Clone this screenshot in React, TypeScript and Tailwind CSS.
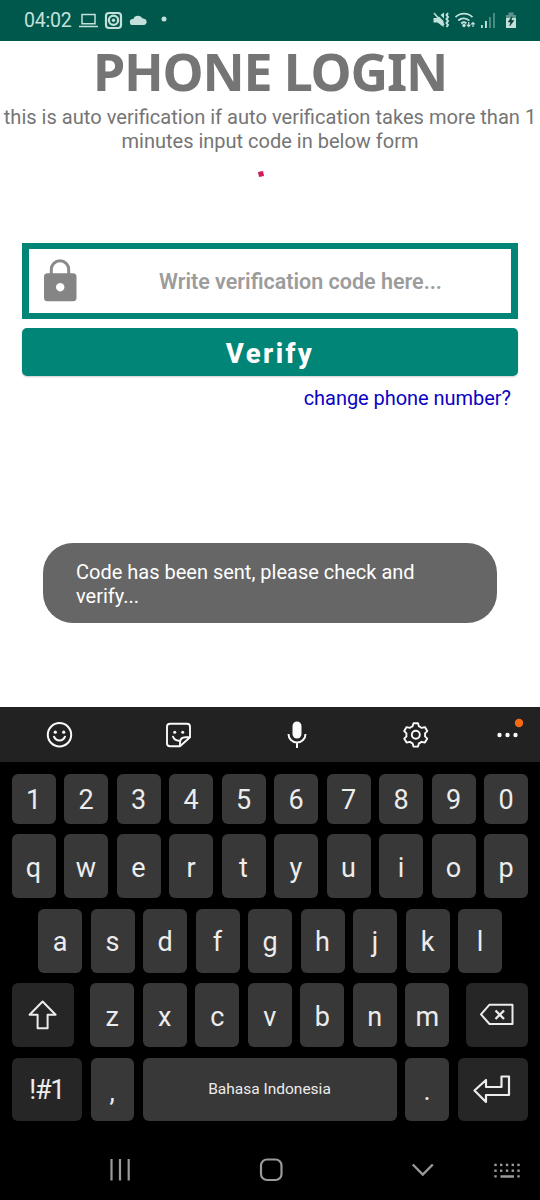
import type { ReactNode } from "react";

type KeyProps = { children: ReactNode; className?: string };

function Key({ children, className = "w-11 bg-[#383838] text-[27px]" }: KeyProps) {
  return (
    <div className={`flex h-full shrink-0 items-center justify-center rounded-[6px] text-[#ececec] ${className}`}>
      {children}
    </div>
  );
}

function LetterKeys({ letters }: { letters: string }) {
  return (
    <>
      {letters.split("").map((c) => (
        <Key key={c}>
          <span className="pt-[4px]">{c}</span>
        </Key>
      ))}
    </>
  );
}

function StatusBar() {
  return (
    <header className="flex h-[41px] items-center bg-[#00574b] text-[#c3e0db]">
      <span className="ml-6 w-[49px] text-[19.500px] leading-none tracking-[-0.200px] whitespace-nowrap">04:02</span>
      <svg className="ml-[5px]" width="21" height="18" viewBox="78 11 21 18" fill="none" stroke="currentColor" strokeWidth="1.5">
        <path d="M82 13.6h13v9.2H82zM79 25.6h19" />
      </svg>
      <svg className="ml-[5px]" width="19" height="19" viewBox="104 10 19 19" fill="none" stroke="currentColor">
        <rect x="106" y="12" width="15" height="15" rx="3" strokeWidth="2.2" />
        <circle cx="113.5" cy="19.3" r="4.6" strokeWidth="2.2" />
        <circle cx="113.5" cy="19.3" r="1.7" fill="currentColor" stroke="none" />
      </svg>
      <svg className="ml-[6px]" width="20" height="18" viewBox="129 10.500 20 18" fill="currentColor">
        <path d="M133 23.500a3 3 0 0 1-.3-6h.6a5.200 5.200 0 0 1 9.300-.5 3.300 3.300 0 0 1 1.400 6.500z" />
      </svg>
      <svg className="mb-[3px] ml-[12px]" width="6" height="6" viewBox="0 0 6 6" fill="currentColor">
        <circle cx="3" cy="3" r="2.500" />
      </svg>
      <svg className="ml-auto" width="20" height="20" viewBox="431.500 10 20 20" fill="none" stroke="currentColor" strokeWidth="1.500">
        <path d="M433 17h3.500l2-1.500 4.500 4.500v6l-6-4.500h-4zM440 14l3.500-2.500v6z" fill="currentColor" stroke="none" />
        <path d="M433.500 12l10 12" />
        <path d="M447.500 12l-1.500 2 1.500 2-1.500 2 1.500 2-1.500 2 1.500 2-1.500 2" strokeWidth="2" />
      </svg>
      <svg className="ml-[2px]" width="22" height="20" viewBox="454 10 22 20" fill="none" stroke="currentColor" strokeWidth="1.800">
        <path d="M455.500 16.200a12 12 0 0 1 17 0M458.300 19.500a8 8 0 0 1 11 .2M461.200 22.500a4 4 0 0 1 5.200-.2" />
        <circle cx="464" cy="24.500" r="1.700" fill="currentColor" stroke="none" />
        <path d="M468.700 21v4.500m-1.800-1.800l1.800 1.900 1.800-1.900M473 26v-4.500m-1.800 1.900l1.800-1.900 1.800 1.900" strokeWidth="1.200" />
      </svg>
      <svg className="ml-[4px]" width="17" height="18" viewBox="480 11 17 18" fill="currentColor">
        <path d="M481 24h1.800v3H481zM485 20h1.900v7H485z" />
        <path opacity=".4" d="M489 16h1.900v11H489zM493 12h1.900v15H493z" />
      </svg>
      <svg className="mr-[23px] ml-[8px]" width="12" height="18" viewBox="505 11 12 18">
        <path d="M508.500 11.500h5V14h2.500v4h-10v-4h2.500z" fill="#5d958d" />
        <path d="M506 17h10v10h-10z" fill="#c3e0db" />
        <path d="M512 15.500l-3.800 5.500h2.500l-1 4 4.300-5.500h-2.700z" fill="#053f37" stroke="#053f37" strokeWidth=".5" />
      </svg>
    </header>
  );
}

function LoginForm() {
  return (
    <main className="flex h-[666px] flex-col bg-white">
      <h1 className="h-[64px] text-center font-['Noto_Sans',sans-serif] text-[52px] leading-[59px] font-bold tracking-[-1.200px] whitespace-nowrap text-[#757575]">
        PHONE LOGIN
      </h1>
      <p className="text-center text-[20px] leading-[24px] whitespace-nowrap text-[#757575]">
        <span className="text-[20.100px]">this is auto verification if auto verification takes more than 1</span>
        <br />
        minutes input code in below form
      </p>
      <div className="mt-[17px] flex h-[8px] justify-center pr-[19px]">
        <svg width="8" height="8" viewBox="0 0 8 8">
          <path d="M1 2l5-1 1 5-5 1z" fill="#cf1b58" />
        </svg>
      </div>
      <div className="mx-[22px] mt-[65px] flex h-[76px] items-center border-x-[7px] border-y-[6px] border-[#008577]">
        <svg className="ml-[13px]" width="36" height="46" viewBox="42.500 258 36 46">
          <path d="M51.800 275v-5.500a8.700 8.700 0 0 1 17.400 0v5.500" fill="none" stroke="#8a8a8a" strokeWidth="3" />
          <path fillRule="evenodd" d="M48 273.300h25.500a3.500 3.500 0 0 1 3.500 3.500v21a3.500 3.500 0 0 1-3.500 3.500H48a3.500 3.500 0 0 1-3.500-3.500v-21a3.500 3.500 0 0 1 3.500-3.500zm12.700 9.700a4.200 4.200 0 1 0 .01 0z" fill="#858585" />
        </svg>
        <span className="ml-[81px] pt-[2px] text-[21.500px] font-semibold whitespace-nowrap text-[#9c9c9c]">
          Write verification code here...
        </span>
      </div>
      <button className="mx-[22px] mt-[9px] h-12 rounded-[5px] bg-[#008577] pt-[4px] text-[27.500px] leading-none font-extrabold tracking-[2.400px] text-white shadow-[0_1px_2px_rgba(0,0,0,0.2)]">
        Verify
      </button>
      <a className="mt-[9px] mr-[29px] self-end text-[20px] leading-[26px] tracking-[-0.040px] whitespace-nowrap text-[#0b02c4]">
        change phone number?
      </a>
      <div className="mt-[132px] ml-[43px] flex h-[80px] w-[454px] items-center rounded-[30px] bg-[#666] pt-[3px] pl-[33px]">
        <p className="text-[20px] leading-[23.500px] text-white">
          Code has been sent, please check and
          <br />
          verify...
        </p>
      </div>
    </main>
  );
}

function Toolbar() {
  return (
    <div className="flex h-[55px] items-center bg-[#222] text-[#fafafa]">
      <svg className="ml-[45px]" width="28" height="28" viewBox="45 720.800 28 28" fill="none" stroke="currentColor" strokeWidth="2">
        <circle cx="59.500" cy="734.500" r="11.700" />
        <circle cx="55.300" cy="732" r="1.600" fill="currentColor" stroke="none" />
        <circle cx="63.700" cy="732" r="1.600" fill="currentColor" stroke="none" />
        <path d="M54 736.500a5.900 5.900 0 0 0 11 0" strokeLinecap="round" />
      </svg>
      <svg className="ml-[91px]" width="28" height="28" viewBox="164 720.800 28 28" fill="none" stroke="currentColor" strokeWidth="1.900" strokeLinejoin="round" strokeLinecap="round">
        <path d="M180 746h-10a3 3 0 0 1-3-3v-16.500a3 3 0 0 1 3-3h17a3 3 0 0 1 3 3v10.500l-10 9zM180 746v-3.500c0-3.500 2-5.500 5.500-5.500h4.500" />
        <path d="M173 736.500c.9 2.400 3 3.900 6 4" />
        <circle cx="174.700" cy="732" r="1.500" fill="currentColor" stroke="none" />
        <circle cx="182.700" cy="732" r="1.500" fill="currentColor" stroke="none" />
      </svg>
      <svg className="ml-[91px]" width="28" height="28" viewBox="283 721 28 28" fill="none" stroke="currentColor" strokeWidth="2">
        <rect x="292.500" y="721.500" width="9" height="17" rx="4.500" fill="currentColor" stroke="none" />
        <path d="M288.500 734a8.500 8.500 0 0 0 17 0M297 742.500v5.500" />
      </svg>
      <svg className="ml-[91px]" width="28" height="28" viewBox="402 721 28 28" fill="none" stroke="currentColor" strokeWidth="1.900" strokeLinejoin="round">
        <path d="M413.500 723.200h4.500l.9 3.100a9 9 0 0 1 2.800 1.600l3.200-.8 2.400 4-2.300 2.300a9 9 0 0 1 0 2.900l2.300 2.300-2.400 4-3.200-.8a9 9 0 0 1-2.800 1.600l-.9 3.200h-4.500l-.9-3.200a9 9 0 0 1-2.800-1.600l-3.200.8-2.400-4 2.300-2.300a9 9 0 0 1 0-2.900l-2.300-2.300 2.400-4 3.200.8a9 9 0 0 1 2.800-1.600z" />
        <circle cx="415.800" cy="734.800" r="4" />
      </svg>
      <svg className="ml-[66px]" width="30" height="34" viewBox="496 718 30 34" fill="currentColor">
        <circle cx="499.500" cy="735" r="2.200" />
        <circle cx="507.500" cy="735" r="2.200" />
        <circle cx="515.500" cy="735" r="2.200" />
        <circle cx="519" cy="723" r="4.200" fill="#f96a12" />
      </svg>
    </div>
  );
}

function Keyboard() {
  return (
    <div className="flex flex-col gap-[10.500px] bg-black pt-[11.500px] pl-[11.500px]">
      <div className="flex h-[50px] gap-[8.500px]">
        {"1234567890".split("").map((n) => (
          <Key key={n}>
            <span className="pt-[3px]">{n}</span>
          </Key>
        ))}
      </div>
      <div className="flex h-[64px] gap-[8.500px]">
        <LetterKeys letters="qwertyuiop" />
      </div>
      <div className="flex h-[64px] gap-[8.500px] pl-[26.500px]">
        <LetterKeys letters="asdfghjkl" />
      </div>
      <div className="flex h-[64px] gap-[8.500px]">
        <Key className="mr-[7.800px] w-[62.500px] bg-[#262626]">
          <svg width="30" height="32" viewBox="28 999 30 32" fill="none" stroke="currentColor" strokeWidth="2" strokeLinejoin="round">
            <path d="M42.600 1001.500l-13 13.300h8v13.500h10v-13.500h8z" />
          </svg>
        </Key>
        <LetterKeys letters="zxcvbnm" />
        <Key className="ml-[7.800px] w-[62.500px] bg-[#262626]">
          <svg width="36" height="26" viewBox="479.500 1001.500 36 26" fill="none" stroke="currentColor" strokeWidth="2" strokeLinejoin="round">
            <path d="M490 1004.200h23v19.300h-23l-8.500-9.600z" />
            <path d="M496 1010l8.500 8.500m0-8.500l-8.500 8.500" strokeWidth="2.300" />
          </svg>
        </Key>
      </div>
      <div className="flex h-[63.500px] gap-[8.500px]">
        <Key className="w-[70.500px] bg-[#262626] pt-[2px] text-[27px] tracking-[-1.200px]">!#1</Key>
        <Key className="w-[43.500px] bg-[#383838] text-[27px]">
          <span className="pt-[5px]">,</span>
        </Key>
        <Key className="w-[254px] bg-[#383838] pt-[1px] text-[15.500px]">Bahasa Indonesia</Key>
        <Key className="w-11 bg-[#383838] text-[27px]">
          <span className="pt-[3px]">.</span>
        </Key>
        <Key className="w-[70.500px] bg-[#262626]">
          <svg width="40" height="32" viewBox="472 1074 40 32" fill="none" stroke="currentColor" strokeWidth="2.200" strokeLinejoin="round">
            <path d="M473.500 1091.500l11.500-10.500v7h15.500v-10.500h7.500v18.500h-23v7z" />
          </svg>
        </Key>
      </div>
    </div>
  );
}

function NavBar() {
  return (
    <nav className="flex flex-1 items-center bg-black pt-[19px] text-[#9a9a9a]">
      <svg className="ml-[108px]" width="24" height="24" viewBox="108 1158 24 24" stroke="currentColor" strokeWidth="2.200">
        <path d="M111.500 1159v21.500M120 1159v21.500M128.700 1159v21.500" />
      </svg>
      <svg className="ml-[126px]" width="26" height="26" viewBox="258 1157 26 26" fill="none" stroke="currentColor" strokeWidth="2.200">
        <rect x="261" y="1159.500" width="20.500" height="20.500" rx="6" />
      </svg>
      <svg className="ml-[127px]" width="24" height="24" viewBox="411 1158 24 24" fill="none" stroke="currentColor" strokeWidth="2.400">
        <path d="M412.800 1164.500l10 10 10-10" />
      </svg>
      <svg className="ml-[58px]" width="28" height="24" viewBox="493 1158 28 24" fill="currentColor">
        {[495.500, 501.200, 507, 512.800, 518.500].map((x) => (
          <g key={x}>
            <rect x={x - 1.200} y="1163.700" width="2.400" height="2.400" />
            <rect x={x - 1.200} y="1169.500" width="2.400" height="2.400" />
          </g>
        ))}
        <path d="M494.300 1175.200h2.400v2.400h-2.400zM500.500 1175.200h13.500v2.500h-13.500zM517.300 1175.200h2.400v2.400h-2.400z" />
      </svg>
    </nav>
  );
}

export default function App() {
  return (
    <div className="flex h-[1200px] w-[540px] flex-col overflow-hidden bg-black font-['Roboto',sans-serif]">
      <StatusBar />
      <LoginForm />
      <Toolbar />
      <Keyboard />
      <NavBar />
    </div>
  );
}
